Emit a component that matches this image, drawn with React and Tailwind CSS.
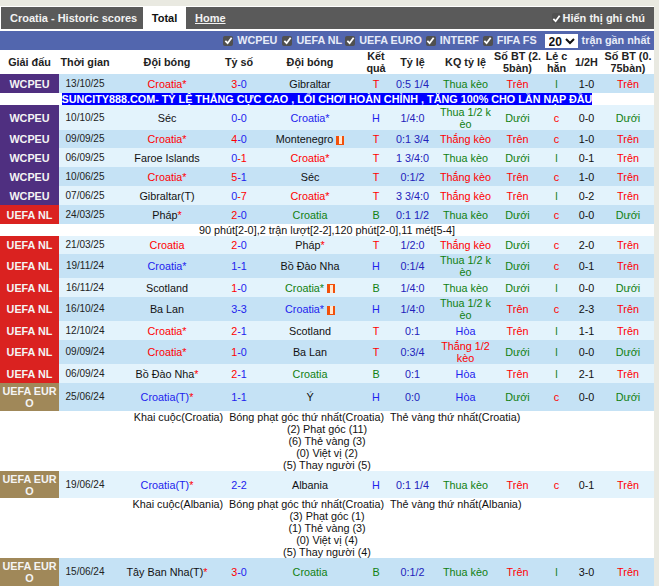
import React from "react";

const COLORS = {
  red: "text-[#ff0000]",
  blue: "text-[#2222ee]",
  green: "text-[#108010]",
  black: "text-[#111111]",
};

const LEAGUE_BG = {
  WCPEU: "bg-[#4f2f80]",
  "UEFA NL": "bg-[#da2220]",
  "UEFA EURO": "bg-[#a08859]",
};

const FILTERS = [
  { name: "WCPEU", gap: "mr-[5px]" },
  { name: "UEFA NL", gap: "mr-[3px]" },
  { name: "UEFA EURO", gap: "mr-[4px]" },
  { name: "INTERF", gap: "mr-[4px]" },
  { name: "FIFA FS", gap: "mr-[8px]" },
];

// red = winner's side, blue = neutral
const rows = [
  { type: "match", l: "WCPEU", d: "13/10/25", h: "Croatia*", hc: "red", s: ["3", "-0", "red", "blue"], a: "Gibraltar", ac: "black", r: "T", o: "0:5 1/4", k: "Thua kèo", kc: "green", b: "Trên", le: "l", f: "1-0", b2: "Trên", rowH: "h-[19px]", bg: "bg-[#c5e2f5]" },
  { type: "banner" },
  { type: "match", l: "WCPEU", d: "10/10/25", h: "Séc", hc: "black", s: ["0", "-0", "blue", "blue"], a: "Croatia*", ac: "blue", r: "H", o: "1/4:0", k: "Thua 1/2 kèo", kc: "green", b: "Dưới", le: "c", f: "0-0", b2: "Dưới", rowH: "h-[25px]", bg: "bg-[#e3f3fc]" },
  { type: "match", l: "WCPEU", d: "09/09/25", h: "Croatia*", hc: "red", s: ["4", "-0", "red", "blue"], a: "Montenegro", ac: "black", warn: true, r: "T", o: "0:1 3/4", k: "Thắng kèo", kc: "red", b: "Trên", le: "c", f: "1-0", b2: "Trên", rowH: "h-[18px]", bg: "bg-[#c5e2f5]" },
  { type: "match", l: "WCPEU", d: "06/09/25", h: "Faroe Islands", hc: "black", s: ["0", "-1", "blue", "red"], a: "Croatia*", ac: "red", r: "T", o: "1 3/4:0", k: "Thua kèo", kc: "green", b: "Dưới", le: "l", f: "0-1", b2: "Trên", rowH: "h-[19px]", bg: "bg-[#e3f3fc]" },
  { type: "match", l: "WCPEU", d: "10/06/25", h: "Croatia*", hc: "red", s: ["5", "-1", "red", "blue"], a: "Séc", ac: "black", r: "T", o: "0:1/2", k: "Thắng kèo", kc: "red", b: "Trên", le: "c", f: "1-0", b2: "Trên", rowH: "h-[19px]", bg: "bg-[#c5e2f5]" },
  { type: "match", l: "WCPEU", d: "07/06/25", h: "Gibraltar(T)", hc: "black", s: ["0", "-7", "blue", "red"], a: "Croatia*", ac: "red", r: "T", o: "3 3/4:0", k: "Thắng kèo", kc: "red", b: "Trên", le: "l", f: "0-2", b2: "Trên", rowH: "h-[19px]", bg: "bg-[#e3f3fc]" },
  { type: "match", l: "UEFA NL", d: "24/03/25", h: "Pháp", star: true, hc: "black", s: ["2", "-0", "red", "blue"], a: "Croatia", ac: "green", r: "B", o: "0:1 1/2", k: "Thua kèo", kc: "green", b: "Dưới", le: "c", f: "0-0", b2: "Dưới", rowH: "h-[19px]", bg: "bg-[#c5e2f5]" },
  { type: "note", text: "90 phút[2-0],2 trận lượt[2-2],120 phút[2-0],11 mét[5-4]" },
  { type: "match", l: "UEFA NL", d: "21/03/25", h: "Croatia", hc: "red", s: ["2", "-0", "red", "blue"], a: "Pháp", awayStar: true, ac: "black", r: "T", o: "1/2:0", k: "Thắng kèo", kc: "red", b: "Dưới", le: "c", f: "2-0", b2: "Trên", rowH: "h-[18px]", bg: "bg-[#e3f3fc]" },
  { type: "match", l: "UEFA NL", d: "19/11/24", h: "Croatia*", hc: "blue", s: ["1", "-1", "blue", "blue"], a: "Bồ Đào Nha", ac: "black", r: "H", o: "0:1/4", k: "Thua 1/2 kèo", kc: "green", b: "Dưới", le: "c", f: "0-1", b2: "Trên", rowH: "h-[24px]", bg: "bg-[#c5e2f5]" },
  { type: "match", l: "UEFA NL", d: "16/11/24", h: "Scotland", hc: "black", s: ["1", "-0", "red", "blue"], a: "Croatia*", ac: "green", warn: true, r: "B", o: "1/4:0", k: "Thua kèo", kc: "green", b: "Dưới", le: "l", f: "0-0", b2: "Dưới", rowH: "h-[19px]", bg: "bg-[#e3f3fc]" },
  { type: "match", l: "UEFA NL", d: "16/10/24", h: "Ba Lan", hc: "black", s: ["3", "-3", "blue", "blue"], a: "Croatia*", ac: "blue", warn: true, r: "H", o: "1/4:0", k: "Thua 1/2 kèo", kc: "green", b: "Trên", le: "c", f: "2-3", b2: "Trên", rowH: "h-[24px]", bg: "bg-[#c5e2f5]" },
  { type: "match", l: "UEFA NL", d: "12/10/24", h: "Croatia*", hc: "red", s: ["2", "-1", "red", "blue"], a: "Scotland", ac: "black", r: "T", o: "0:1", k: "Hòa", kc: "blue", b: "Trên", le: "l", f: "1-1", b2: "Trên", rowH: "h-[19px]", bg: "bg-[#e3f3fc]" },
  { type: "match", l: "UEFA NL", d: "09/09/24", h: "Croatia*", hc: "red", s: ["1", "-0", "red", "blue"], a: "Ba Lan", ac: "black", r: "T", o: "0:3/4", k: "Thắng 1/2 kèo", kc: "red", b: "Dưới", le: "l", f: "0-0", b2: "Dưới", rowH: "h-[24px]", bg: "bg-[#c5e2f5]" },
  { type: "match", l: "UEFA NL", d: "06/09/24", h: "Bồ Đào Nha", star: true, hc: "black", s: ["2", "-1", "red", "blue"], a: "Croatia", ac: "green", r: "B", o: "0:1", k: "Hòa", kc: "blue", b: "Trên", le: "l", f: "2-1", b2: "Trên", rowH: "h-[19px]", bg: "bg-[#e3f3fc]" },
  { type: "match", l: "UEFA EURO", d: "25/06/24", h: "Croatia(T)", star: true, hc: "blue", s: ["1", "-1", "blue", "blue"], a: "Ý", ac: "black", r: "H", o: "0:0", k: "Hòa", kc: "blue", b: "Dưới", le: "c", f: "0-0", b2: "Dưới", rowH: "h-[28px]", bg: "bg-[#c5e2f5]" },
  { type: "detail", lines: ["Khai cuộc(Croatia)\u00a0\u00a0Bóng phạt góc thứ nhất(Croatia)\u00a0\u00a0Thẻ vàng thứ nhất(Croatia)", "(2) Phạt góc (11)", "(6) Thẻ vàng (3)", "(0) Việt vị (2)", "(5) Thay người (5)"] },
  { type: "match", l: "UEFA EURO", d: "19/06/24", h: "Croatia(T)", star: true, hc: "blue", s: ["2", "-2", "blue", "blue"], a: "Albania", ac: "black", r: "H", o: "0:1 1/4", k: "Thua kèo", kc: "green", b: "Trên", le: "c", f: "0-1", b2: "Trên", rowH: "h-[27px]", bg: "bg-[#e3f3fc]" },
  { type: "detail", lines: ["Khai cuộc(Albania)\u00a0\u00a0Bóng phạt góc thứ nhất(Croatia)\u00a0\u00a0Thẻ vàng thứ nhất(Albania)", "(3) Phạt góc (1)", "(1) Thẻ vàng (3)", "(0) Việt vị (4)", "(5) Thay người (4)"] },
  { type: "match", l: "UEFA EURO", d: "15/06/24", h: "Tây Ban Nha(T)", star: true, hc: "black", s: ["3", "-0", "red", "blue"], a: "Croatia", ac: "green", r: "B", o: "0:1/2", k: "Thua kèo", kc: "green", b: "Trên", le: "l", f: "3-0", b2: "Trên", rowH: "h-[28px]", bg: "bg-[#c5e2f5]" },
];

function CheckBox() {
  return (
    <span className="inline-flex h-[10px] w-[10px] shrink-0 items-center justify-center rounded-[2px] bg-[#505050]">
      <svg width="9" height="9" viewBox="0 0 10 10" fill="none">
        <path d="M1.5 5.5 L4 8 L8.5 2" stroke="#ffffff" strokeWidth="2" />
      </svg>
    </span>
  );
}

function WarnIcon() {
  return (
    <span className="ml-[3px] inline-flex h-[9px] w-[8px] items-center justify-center bg-[#f2500a] align-[-1px]">
      <span className="h-[8px] w-[3px] bg-[#ffe6cf]"></span>
    </span>
  );
}

function MatchRow({ row }) {
  const resColor = { T: "red", H: "blue", B: "green" }[row.r];
  return (
    <tr className={`${row.rowH} ${row.bg}`}>
      <td className={`break-all leading-[12px] font-bold text-[#f4f4f4] ${LEAGUE_BG[row.l]}`}>{row.l}</td>
      <td className="text-[10px] text-[#222222]">{row.d}</td>
      <td className={COLORS[row.hc]}>
        {row.h}
        {row.star && <span className="text-[#ff0000]">*</span>}
      </td>
      <td>
        <span className={COLORS[row.s[2]]}>{row.s[0]}</span>
        <span className={COLORS[row.s[3]]}>{row.s[1]}</span>
      </td>
      <td className={COLORS[row.ac]}>
        {row.a}
        {row.awayStar && <span className="text-[#ff0000]">*</span>}
        {row.warn && <WarnIcon />}
      </td>
      <td className={COLORS[resColor]}>{row.r}</td>
      <td className="text-[#2222bb]">{row.o}</td>
      <td className={`break-all ${COLORS[row.kc]}`}>{row.k}</td>
      <td className={row.b === "Trên" ? COLORS.red : COLORS.green}>{row.b}</td>
      <td className={row.le === "c" ? COLORS.red : COLORS.green}>{row.le}</td>
      <td className="text-[#111111]">{row.f}</td>
      <td className={row.b2 === "Trên" ? COLORS.red : COLORS.green}>{row.b2}</td>
    </tr>
  );
}

export default function App() {
  return (
    <div className="h-[586px] w-[659px] overflow-hidden bg-[#e9e9e1] pt-[6px] font-['Liberation_Sans',Arial,sans-serif]">
      <div className="w-[654px] bg-white">
        {/* title bar */}
        <div className="border-t border-l border-white">
          <div className="flex h-[22px] items-stretch bg-[#5a5a5a] text-[11px] font-bold text-[#f2f2f2]">
            <div className="flex w-[142px] items-center pl-[9px] whitespace-nowrap">Croatia - Historic scores</div>
            <div className="flex w-[43px] items-center justify-center bg-white text-[#111111]">Total</div>
            <a href="#home" className="ml-[9px] flex items-center underline">Home</a>
            <label className="ml-auto flex items-center gap-[1px] pr-[9px]">
              <CheckBox />
              Hiển thị ghi chú
            </label>
          </div>
        </div>

        {/* filter bar */}
        <div className="mt-[2px] flex h-[19px] items-center justify-end bg-[#5266ae] pr-[4px] text-[10.8px] font-bold text-[#e8ecf8]">
          {FILTERS.map((f) => (
            <label key={f.name} className={`flex items-center gap-[4px] ${f.gap}`}>
              <CheckBox />
              {f.name}
            </label>
          ))}
          <select defaultValue="20" className="mr-[4px] h-[14px] w-[33px] bg-white text-[12px] text-[#111111]">
            <option value="20">20</option>
            <option value="30">30</option>
          </select>
          trận gần nhất
        </div>

        <table className="w-[654px] table-fixed border-collapse text-center text-[10.8px] leading-[12px]">
          <colgroup>
            <col className="w-[59px]" />
            <col className="w-[52px]" />
            <col className="w-[112px]" />
            <col className="w-[32px]" />
            <col className="w-[110px]" />
            <col className="w-[22px]" />
            <col className="w-[51px]" />
            <col className="w-[55px]" />
            <col className="w-[49px]" />
            <col className="w-[29px]" />
            <col className="w-[31px]" />
            <col className="w-[52px]" />
          </colgroup>
          <thead>
            <tr className="h-[24px] font-bold text-[#222222]">
              <th>Giải đấu</th>
              <th>Thời gian</th>
              <th>Đội bóng</th>
              <th>Tỷ số</th>
              <th>Đội bóng</th>
              <th>Kết quả</th>
              <th>Tỷ lệ</th>
              <th>KQ tỷ lệ</th>
              <th className="break-all">Số BT (2.5bàn)</th>
              <th className="break-all">Lẻ c hẵn</th>
              <th>1/2H</th>
              <th className="break-all">Số BT (0.75bàn)</th>
            </tr>
          </thead>
          <tbody>
            {rows.map((row, i) => {
              if (row.type === "match") return <MatchRow key={i} row={row} />;
              if (row.type === "banner") {
                return (
                  <tr key={i} className="h-[12px]">
                    <td colSpan={12}>
                      <span className="bg-[#0000ff] font-bold text-white">
                        SUNCITY888.COM- TỶ LỆ THẮNG CỰC CAO , LỐI CHƠI HOÀN CHỈNH , TẶNG 100% CHO LẦN NẠP ĐẦU
                      </span>
                    </td>
                  </tr>
                );
              }
              if (row.type === "note") {
                return (
                  <tr key={i} className="h-[12px]">
                    <td colSpan={12} className="text-[#111111]">{row.text}</td>
                  </tr>
                );
              }
              return (
                <tr key={i}>
                  <td colSpan={12} className="text-[#111111]">
                    {row.lines.map((line) => (
                      <div key={line}>{line}</div>
                    ))}
                  </td>
                </tr>
              );
            })}
          </tbody>
        </table>
      </div>
    </div>
  );
}
